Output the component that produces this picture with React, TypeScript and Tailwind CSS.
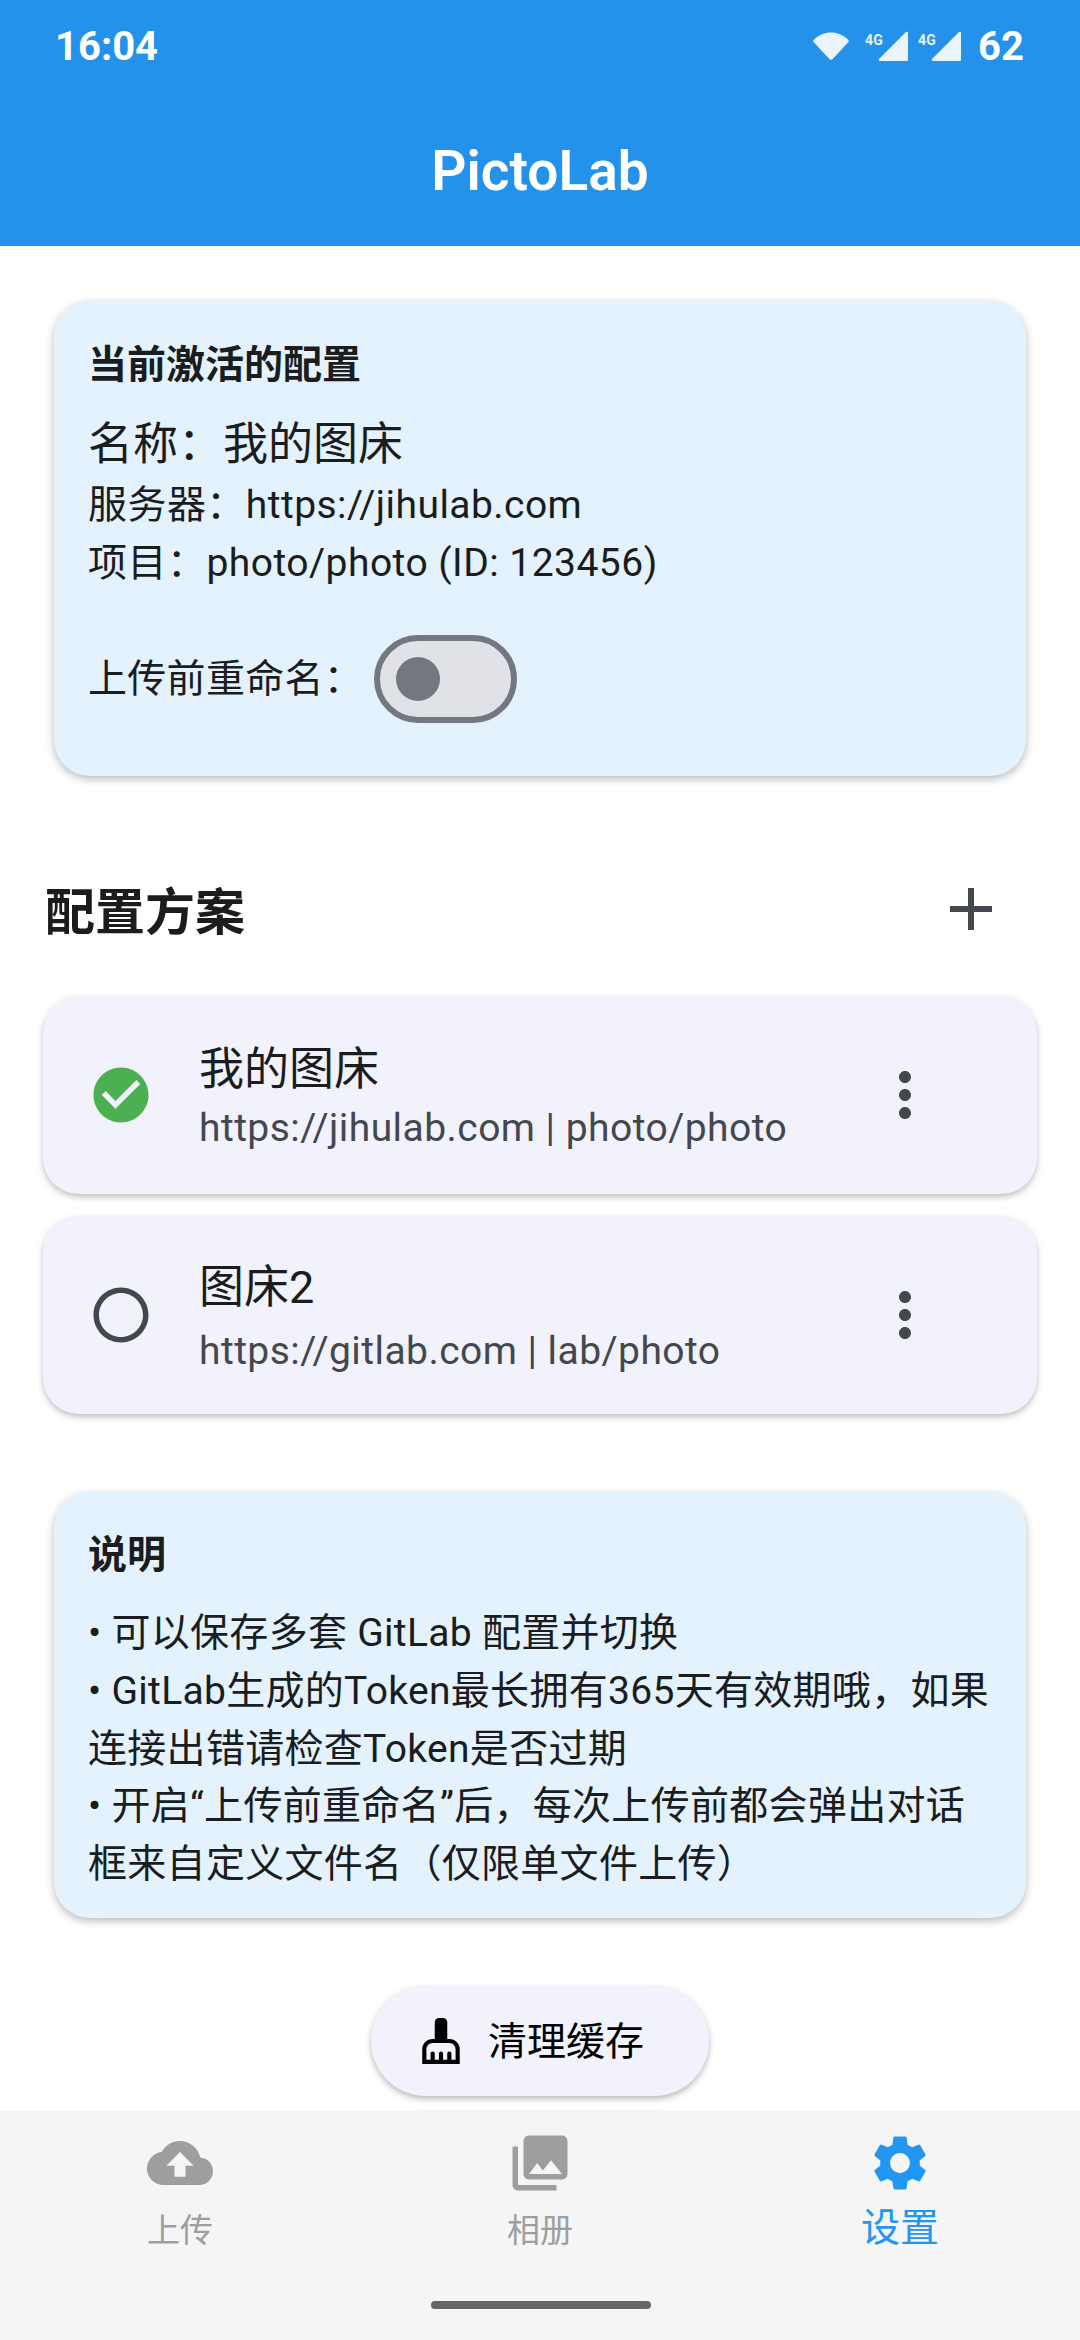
import React from "react";
import {
  MdAdd,
  MdCheckCircle,
  MdCleaningServices,
  MdCloudUpload,
  MdMoreVert,
  MdPhotoLibrary,
  MdRadioButtonUnchecked,
  MdSettings,
} from "react-icons/md";

function Signal() {
  return (
    <div className="relative w-[44px] h-[30px]">
      <span className="absolute left-[1px] top-[2px] text-[14px] leading-[14px] font-bold text-[#eaf4fd]">4G</span>
      <svg viewBox="0 0 30 30" className="absolute right-0 top-0 w-[30px] h-[30px]">
        <path d="M28 1 a1.2 1.2 0 0 1 2 1 V29 a1 1 0 0 1 -1 1 H2 a1.2 1.2 0 0 1 -1 -2 Z" fill="#eaf4fd" />
      </svg>
    </div>
  );
}

function StatusBar() {
  return (
    <div className="h-[92px] pl-[55px] pr-[56px] pt-[31px] flex items-start justify-between">
      <span className="text-[40px] leading-[32px] font-bold text-white">16:04</span>
      <div className="flex items-start">
        <svg viewBox="0 0 36 28" className="w-[36px] h-[28px] mt-[1px] mr-[15px]">
          <path d="M0.6 8.2 C10 -2 26 -2 35.4 8.2 C35.9 8.8 35.9 9.4 35.5 10 L19.4 27.2 C18.6 28 17.4 28 16.6 27.2 L0.5 10 C0.1 9.4 0.1 8.8 0.6 8.2 Z" fill="#eaf4fd" />
        </svg>
        <Signal />
        <div className="w-[9px]" />
        <Signal />
        <span className="ml-[17px] text-[40px] leading-[32px] font-bold text-white">62</span>
      </div>
    </div>
  );
}

function ActiveCard() {
  return (
    <div className="mx-[54px] mt-[55px] h-[475px] rounded-[36px] bg-[#e3f2fd] shadow-[0_3px_8px_rgba(0,0,0,0.28)] pl-[34px] pr-[36px] pt-[37px] text-[#1a1c1e]">
      <div className="text-[39px] leading-[54px] font-bold">当前激活的配置</div>
      <div className="mt-[24px] text-[45px] leading-[58px]">名称：我的图床</div>
      <div className="mt-[2px] text-[39px] leading-[58px] tracking-[0.45px]">服务器：https://jihulab.com</div>
      <div className="text-[39px] leading-[58px] tracking-[0.47px]">项目：photo/photo (ID: 123456)</div>
      <div className="mt-[43px] flex items-center">
        <span className="text-[39px] leading-[58px] tracking-[0.3px]">上传前重命名：</span>
        <div className="ml-[11px] w-[143px] h-[88px] rounded-full border-[6px] border-[#74777f] bg-[#e0e2e8] flex items-center pl-[16px]">
          <div className="w-[44px] h-[44px] rounded-full bg-[#74777f]" />
        </div>
      </div>
    </div>
  );
}

function ProfileCard({ active, title, sub }: { active: boolean; title: string; sub: string }) {
  return (
    <div className="h-[198px] rounded-[36px] bg-[#f1f2fb] shadow-[0_3px_6px_rgba(0,0,0,0.25)] flex items-center pl-[45px] pr-[96px] text-[#1a1c1e]">
      {active ? (
        <MdCheckCircle className="w-[66px] h-[66px] text-[#4caf50] shrink-0" />
      ) : (
        <MdRadioButtonUnchecked className="w-[66px] h-[66px] text-[#44474e] shrink-0" />
      )}
      <div className="ml-[45px] flex-1 pt-[4px]">
        <div className="text-[45px] leading-[60px]">{title}</div>
        <div className={active ? "mt-[2px] text-[39px] leading-[52px] text-[#44474e] tracking-[0.45px]" : "mt-[7px] text-[39px] leading-[52px] text-[#44474e] tracking-[0.45px]"}>
          {sub}
        </div>
      </div>
      <MdMoreVert className="w-[72px] h-[72px] text-[#44474e] shrink-0" />
    </div>
  );
}

function InfoCard() {
  return (
    <div className="mx-[54px] mt-[78px] h-[426px] rounded-[36px] bg-[#e3f2fd] shadow-[0_3px_8px_rgba(0,0,0,0.28)] pl-[34px] pr-[30px] pt-[36px] text-[#1a1c1e]">
      <div className="text-[39px] leading-[54px] font-bold">说明</div>
      <div className="mt-[23px] text-[39px] leading-[57.8px] tracking-[0.3px]">
        <div>• 可以保存多套 GitLab 配置并切换</div>
        <div>• GitLab生成的Token最长拥有365天有效期哦，如果连接出错请检查Token是否过期</div>
        <div>• 开启“上传前重命名”后，每次上传前都会弹出对话框来自定义文件名（仅限单文件上传）</div>
      </div>
    </div>
  );
}

function NavItem({ icon, label, active }: { icon: React.ReactNode; label: string; active?: boolean }) {
  return (
    <div className="flex-1 flex flex-col items-center pt-[20px]">
      {icon}
      <span className={active ? "mt-[5px] text-[39px] leading-[54px] text-[#2196f3]" : "mt-[8px] text-[33px] leading-[54px] text-[#9e9e9e]"}>
        {label}
      </span>
    </div>
  );
}

export default function App() {
  return (
    <div
      className="w-[1080px] h-[2340px] bg-white flex flex-col overflow-hidden"
      style={{ fontFamily: 'Roboto, "Noto Sans CJK SC", sans-serif' }}
    >
      <header className="h-[246px] bg-[#2491eb] shrink-0">
        <StatusBar />
        <div className="text-center text-[55px] leading-[60px] font-semibold text-white mt-[49px]">PictoLab</div>
      </header>

      <main className="flex-1">
        <ActiveCard />
        <div className="mt-[92px] h-[90px] pl-[45px] pr-[73px] flex items-center justify-between">
          <span className="text-[50px] leading-[60px] font-bold text-[#1a1c1e]">配置方案</span>
          <MdAdd className="w-[72px] h-[72px] text-[#44474e] mb-[8px]" />
        </div>
        <div className="mx-[43px] mt-[38px] flex flex-col gap-[22px]">
          <ProfileCard active title="我的图床" sub="https://jihulab.com | photo/photo" />
          <ProfileCard active={false} title="图床2" sub="https://gitlab.com | lab/photo" />
        </div>
        <InfoCard />
        <div className="mt-[68px] flex justify-center">
          <div className="w-[338px] h-[110px] rounded-full bg-[#f1f2fb] shadow-[0_3px_6px_rgba(0,0,0,0.28)] flex items-center pl-[45px]">
            <MdCleaningServices className="w-[50px] h-[50px] text-black" />
            <span className="ml-[22px] text-[39px] text-black pt-[3px]">清理缓存</span>
          </div>
        </div>
      </main>

      <nav className="h-[230px] bg-[#f5f5f5] shrink-0 relative flex">
        <NavItem icon={<MdCloudUpload className="w-[66px] h-[66px] text-[#9e9e9e]" />} label="上传" />
        <NavItem icon={<MdPhotoLibrary className="w-[66px] h-[66px] text-[#9e9e9e]" />} label="相册" />
        <NavItem active icon={<MdSettings className="w-[66px] h-[66px] text-[#2196f3]" />} label="设置" />
        <div className="absolute left-[431px] top-[191px] w-[220px] h-[8px] rounded-full bg-[#666666]" />
      </nav>
    </div>
  );
}
